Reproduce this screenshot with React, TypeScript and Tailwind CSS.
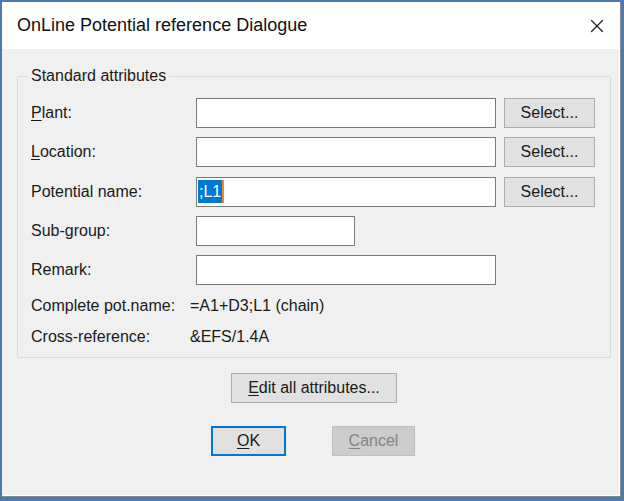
import React from "react";
import { X } from "lucide-react";

const font = { fontFamily: '"Liberation Sans", Arial, sans-serif' };

function Mn({ c }: { c: string }) {
  return <span className="underline decoration-1 underline-offset-2">{c}</span>;
}

function TextBox({ w, children }: { w: string; children?: React.ReactNode }) {
  return (
    <div className={`flex h-[30px] ${w} items-center border-[1.5px] border-[#7a7a7a] bg-white px-[1px]`}>
      {children}
    </div>
  );
}

function Btn({ children, w }: { children: React.ReactNode; w: string }) {
  return (
    <div className={`flex h-[30px] ${w} items-center justify-center border-[1.5px] border-[#adadad] bg-[#e1e1e1] text-[16px] leading-none text-[#1a1a1a]`}>
      {children}
    </div>
  );
}

function Row({ label, children }: { label: React.ReactNode; children: React.ReactNode }) {
  return (
    <div className="flex h-[30px] items-center">
      <div className="w-[178px] pl-[13px] text-[16px] text-[#1a1a1a]">{label}</div>
      {children}
    </div>
  );
}

export default function App() {
  return (
    <div className="h-[501px] w-[624px] bg-[#4a7bb7] pt-[2px] pl-[2px] pr-[3px] pb-[4px]" style={font}>
      <div className="flex h-full flex-col border-r border-b border-[#8a8a8a] bg-white">
        {/* title bar */}
        <div className="flex h-[47px] shrink-0 items-center justify-between bg-white pl-[15px] pr-[12px]">
          <span className="text-[18px] text-[#111]">OnLine Potential reference Dialogue</span>
          <X className="h-[22px] w-[22px] text-[#222]" strokeWidth={1.3} />
        </div>

        {/* body */}
        <div className="flex flex-1 flex-col border-r border-b border-white bg-[#f0f0f0] pl-[15px] pr-[8px] pt-[15px]">
          <fieldset className="rounded-[2px] border border-[#dcdcdc] pb-[11px] pt-[10px]">
            <legend className="ml-[10px] px-[3px] text-[16px] text-[#1a1a1a]">Standard attributes</legend>
            <div className="flex flex-col gap-[9.3px]">
              <Row label={<><Mn c="P" />lant:</>}>
                <TextBox w="w-[300px]" />
                <div className="ml-[8px]">
                  <Btn w="w-[91px]">Select...</Btn>
                </div>
              </Row>
              <Row label={<><Mn c="L" />ocation:</>}>
                <TextBox w="w-[300px]" />
                <div className="ml-[8px]">
                  <Btn w="w-[91px]">Select...</Btn>
                </div>
              </Row>
              <Row label="Potential name:">
                <TextBox w="w-[300px]">
                  <span className="flex h-[23px] items-center bg-[#0078d7] px-[1px] text-[16px] text-white">;L1</span>
                  <span className="h-[23px] w-[2px] bg-[#f08a24]" />
                </TextBox>
                <div className="ml-[8px]">
                  <Btn w="w-[91px]">Select...</Btn>
                </div>
              </Row>
              <Row label="Sub-group:">
                <TextBox w="w-[159px]" />
              </Row>
              <Row label="Remark:">
                <TextBox w="w-[300px]" />
              </Row>
            </div>
            <div className="mt-[11px] flex flex-col gap-[12px] pl-[13px] text-[16px] leading-[19px] text-[#1a1a1a]">
              <div className="flex">
                <span className="w-[159px]">Complete pot.name:</span>
                <span>=A1+D3;L1 (chain)</span>
              </div>
              <div className="flex">
                <span className="w-[159px]">Cross-reference:</span>
                <span>&amp;EFS/1.4A</span>
              </div>
            </div>
          </fieldset>

          <div className="mt-[15px] flex justify-center">
            <Btn w="w-[166px]">
              <span>
                <Mn c="E" />dit all attributes...
              </span>
            </Btn>
          </div>

          <div className="mt-[23px] flex justify-center gap-[46px] pr-[2px]">
            <div className="flex h-[30px] w-[75px] items-center justify-center border-2 border-[#0078d7] bg-[#e1e1e1] text-[16px] leading-none text-[#1a1a1a]">
              <span>
                <Mn c="O" />K
              </span>
            </div>
            <div className="flex h-[30px] w-[83px] items-center justify-center border-[1.5px] border-[#bfbfbf] bg-[#cccccc] text-[16px] leading-none text-[#838383]">
              <span>
                <Mn c="C" />ancel
              </span>
            </div>
          </div>
        </div>
      </div>
    </div>
  );
}
